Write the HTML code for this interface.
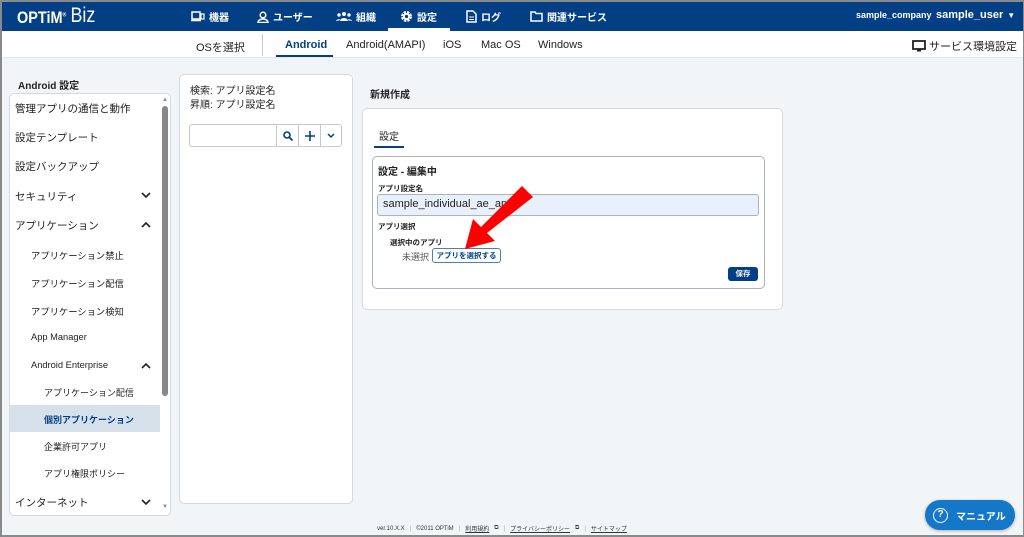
<!DOCTYPE html><html><head><meta charset="utf-8"><style>
*{box-sizing:border-box;margin:0;padding:0}
body{width:1024px;height:537px;overflow:hidden;background:#f2f5f8;font-family:"Liberation Sans","Noto Sans CJK JP",sans-serif;color:#222;position:relative}
.frame{position:absolute;inset:0;border:2px solid #8a8a8a;border-right:1px solid #8a8a8a;pointer-events:none;z-index:50}
.hdr{position:absolute;left:0;top:0;width:1024px;height:31px;background:#023f84;color:#fff}
.hdr .logo{position:absolute;left:17px;top:5px;font-size:17px;font-weight:bold;transform:scaleX(0.85);transform-origin:left;white-space:nowrap}
.hdr .logo span{font-weight:normal;font-size:21px;margin-left:5px;position:relative;top:-1px}
.nav{position:absolute;top:9px;font-size:10px;font-weight:bold;display:flex;align-items:center;gap:4px}
.act{position:absolute;left:388px;top:0;width:62px;height:31px;border-bottom:3px solid #fff}
.sub{position:absolute;left:0;top:31px;width:1024px;height:27px;background:#fff;border-bottom:1px solid #e3e7eb;font-size:11px}
.sub div{position:absolute;top:7px}
.panel{position:absolute;background:#fff;border:1px solid #d4d9de;border-radius:5px}
.it{position:absolute;font-size:10.5px;color:#222}
.s1{font-size:9.3px}.s2{font-size:9px}
.chev{position:absolute;left:141px}
</style></head><body>
<div class="frame"></div>
<div class="hdr">
<div class="logo">OPTiM<sup style="font-size:6px">®</sup><span>Biz</span></div>
<div class="act"></div>
<div class="nav" style="left:191px"><svg width="14" height="11"><rect x="1" y="1" width="8" height="7" fill="none" stroke="#fff" stroke-width="1.5"/><rect x="10" y="3" width="3" height="5" fill="none" stroke="#fff" stroke-width="1.2"/><line x1="0" y1="9.5" x2="10" y2="9.5" stroke="#fff" stroke-width="1.5"/></svg>機器</div>
<div class="nav" style="left:257px"><svg width="12" height="12"><circle cx="6" cy="4" r="2.8" fill="none" stroke="#fff" stroke-width="1.5"/><path d="M1 11.5a5 3.5 0 0 1 10 0z" fill="none" stroke="#fff" stroke-width="1.5"/></svg>ユーザー</div>
<div class="nav" style="left:336px"><svg width="16" height="11"><circle cx="8" cy="3" r="2" fill="#fff"/><circle cx="3" cy="4" r="1.7" fill="#fff"/><circle cx="13" cy="4" r="1.7" fill="#fff"/><path d="M4 10a4 3 0 0 1 8 0zM0 10a3 2.5 0 0 1 5 -1zM16 10a3 2.5 0 0 0 -5 -1z" fill="#fff"/></svg>組織</div>
<div class="nav" style="left:400px"><svg width="13" height="13" viewBox="0 0 13 13"><circle cx="6.5" cy="6.5" r="4" fill="none" stroke="#fff" stroke-width="3" stroke-dasharray="2.2 1"/><circle cx="6.5" cy="6.5" r="3.5" fill="#fff"/><circle cx="6.5" cy="6.5" r="1.6" fill="#023f84"/></svg>設定</div>
<div class="nav" style="left:466px"><svg width="11" height="13"><path d="M1 1h6l3 3v8H1z" fill="none" stroke="#fff" stroke-width="1.5"/><line x1="3" y1="7" x2="8" y2="7" stroke="#fff"/><line x1="3" y1="9.5" x2="8" y2="9.5" stroke="#fff"/></svg>ログ</div>
<div class="nav" style="left:530px"><svg width="13" height="11"><path d="M1 1h4l1 1.5h6v7.5H1z" fill="none" stroke="#fff" stroke-width="1.5"/></svg>関連サービス</div>
<div class="nav" style="left:856px;top:10px;font-size:9px">sample_company</div>
<div class="nav" style="left:936px;top:9px;font-size:11px">sample_user <span style="font-size:8px">▼</span></div>
</div>
<div class="sub">
<div style="left:196px;top:8px">OSを選択</div>
<div style="left:262px;top:3px;width:1px;height:22px;background:#ccc"></div>
<div style="left:285px;top:8px;font-weight:bold;color:#023f84">Android</div>
<div style="left:276px;top:24px;width:57px;height:2px;background:#023f84"></div>
<div style="left:346px;top:8px">Android(AMAPI)</div>
<div style="left:443px;top:8px">iOS</div>
<div style="left:481px;top:8px">Mac OS</div>
<div style="left:538px;top:8px">Windows</div>
<div style="left:912px;top:7px;display:flex;align-items:center;gap:3px"><svg width="14" height="12"><rect x="1" y="1" width="12" height="8" fill="none" stroke="#222" stroke-width="1.8"/><rect x="5" y="9" width="4" height="2.5" fill="#222"/></svg>サービス環境設定</div>
</div>

<div style="position:absolute;left:18px;top:77px;font-size:10px;font-weight:bold">Android 設定</div>
<div class="panel" style="left:9px;top:93px;width:162px;height:423px;overflow:hidden">
<div style="position:absolute;left:152px;top:12px;width:6px;height:290px;background:#888;border-radius:3px"></div>
<div style="position:absolute;left:152px;top:3px;font-size:6px;color:#888">▲</div>
<div style="position:absolute;left:152px;top:410px;font-size:6px;color:#888">▼</div>
<div style="position:absolute;left:0;top:311px;width:150px;height:27px;background:#d6e0ea"></div>
</div>
<div class="it" style="left:15px;top:101px">管理アプリの通信と動作</div>
<div class="it" style="left:15px;top:130px">設定テンプレート</div>
<div class="it" style="left:15px;top:159px">設定バックアップ</div>
<div class="it" style="left:15px;top:189px">セキュリティ</div><svg class="chev" style="top:192px" width="10" height="7"><path d="M1 1l4 4 4-4" fill="none" stroke="#222" stroke-width="1.6"/></svg>
<div class="it" style="left:15px;top:218px">アプリケーション</div><svg class="chev" style="top:221px" width="10" height="7"><path d="M1 6l4-4 4 4" fill="none" stroke="#222" stroke-width="1.6"/></svg>
<div class="it s1" style="left:31px;top:248px">アプリケーション禁止</div>
<div class="it s1" style="left:31px;top:276px">アプリケーション配信</div>
<div class="it s1" style="left:31px;top:304px">アプリケーション検知</div>
<div class="it s1" style="left:31px;top:332px">App Manager</div>
<div class="it s1" style="left:31px;top:360px">Android Enterprise</div><svg class="chev" style="top:362px" width="10" height="7"><path d="M1 6l4-4 4 4" fill="none" stroke="#222" stroke-width="1.6"/></svg>
<div class="it s2" style="left:44px;top:386px">アプリケーション配信</div>
<div class="it s2" style="left:44px;top:413px;font-weight:bold;color:#023f84">個別アプリケーション</div>
<div class="it s2" style="left:44px;top:440px">企業許可アプリ</div>
<div class="it s2" style="left:44px;top:467px">アプリ権限ポリシー</div>
<div class="it" style="left:15px;top:495px">インターネット</div><svg class="chev" style="top:499px" width="10" height="7"><path d="M1 1l4 4 4-4" fill="none" stroke="#222" stroke-width="1.6"/></svg>

<div class="panel" style="left:179px;top:74px;width:174px;height:430px"></div>
<div class="it" style="left:190px;top:85px;font-size:10px;line-height:14px">検索: アプリ設定名<br>昇順: アプリ設定名</div>
<div style="position:absolute;left:189px;top:124px;width:153px;height:23px;border:1px solid #c4cad0;border-radius:3px;background:#fff;display:flex">
<div style="flex:1"></div>
<div style="width:22px;border-left:1px solid #c4cad0;text-align:center"><svg width="10" height="10" style="margin-top:6px"><circle cx="4" cy="4" r="3" fill="none" stroke="#023f84" stroke-width="1.6"/><line x1="6.3" y1="6.3" x2="9.5" y2="9.5" stroke="#023f84" stroke-width="1.8"/></svg></div>
<div style="width:22px;border-left:1px solid #c4cad0;text-align:center"><svg width="10" height="10" style="margin-top:6px"><path d="M5 0v10M0 5h10" stroke="#023f84" stroke-width="1.6"/></svg></div>
<div style="width:21px;border-left:1px solid #c4cad0;text-align:center"><svg width="8" height="6" style="margin-top:8px"><path d="M1 1l3 3 3-3" fill="none" stroke="#023f84" stroke-width="1.5"/></svg></div>
</div>

<div style="position:absolute;left:370px;top:86px;font-size:10px;font-weight:bold">新規作成</div>
<div class="panel" style="left:362px;top:108px;width:421px;height:202px"></div>
<div class="it" style="left:379px;top:128px;font-size:10px">設定</div>
<div style="position:absolute;left:374px;top:146px;width:30px;height:2px;background:#023f84"></div>
<div style="position:absolute;left:372px;top:156px;width:393px;height:133px;border:1px solid #aab2ba;border-radius:5px;background:#fff"></div>
<div class="it" style="left:378px;top:163px;font-size:10px;font-weight:bold">設定 - 編集中</div>
<div class="it" style="left:378px;top:183px;font-size:7.5px;font-weight:bold">アプリ設定名</div>
<div style="position:absolute;left:377px;top:194px;width:382px;height:22px;background:#e8f0fb;border:1px solid #aab2ba;border-radius:3px;font-size:11px;padding:3px 0 0 5px">sample_individual_ae_app</div>
<div class="it" style="left:378px;top:221px;font-size:7.5px;font-weight:bold">アプリ選択</div>
<div class="it" style="left:390px;top:237px;font-size:7.5px;font-weight:bold">選択中のアプリ</div>
<div class="it" style="left:402px;top:250px;font-size:9px;color:#555">未選択</div>
<div style="position:absolute;left:432px;top:248px;width:69px;height:15px;border:1px solid #4a7fb8;border-radius:3px;font-size:7.5px;font-weight:bold;color:#023f84;text-align:center;line-height:13px">アプリを選択する</div>
<div style="position:absolute;left:728px;top:267px;width:30px;height:14px;background:#023f84;border-radius:3px;color:#fff;font-size:7.5px;font-weight:bold;text-align:center;line-height:14px">保存</div>
<svg style="position:absolute;left:455px;top:183px" width="80" height="72"><path d="M67 3 L78 14 L32 50 L40 58 L10 66 L18 36 L26 44 Z" fill="#ff0000"/></svg>

<div style="position:absolute;left:377px;top:524px;font-size:6px;color:#333;display:flex;gap:5px;align-items:center">
<span>ver.10.X.X</span><span style="color:#aaa">|</span><span>©2011 OPTiM</span><span style="color:#aaa">|</span><span style="text-decoration:underline">利用規約</span><span>⧉</span><span style="color:#aaa">|</span><span style="text-decoration:underline">プライバシーポリシー</span><span>⧉</span><span style="color:#aaa">|</span><span style="text-decoration:underline">サイトマップ</span></div>
<div style="position:absolute;left:925px;top:500px;width:90px;height:30px;background:#1477c8;border-radius:15px;color:#fff;font-size:10px;font-weight:bold;display:flex;align-items:center;padding-left:8px;gap:8px;box-shadow:0 1px 3px rgba(0,0,0,.3)"><span style="width:15px;height:15px;border:1.5px solid #fff;border-radius:50%;font-size:10px;text-align:center;line-height:12px">?</span>マニュアル</div>
</body></html>
